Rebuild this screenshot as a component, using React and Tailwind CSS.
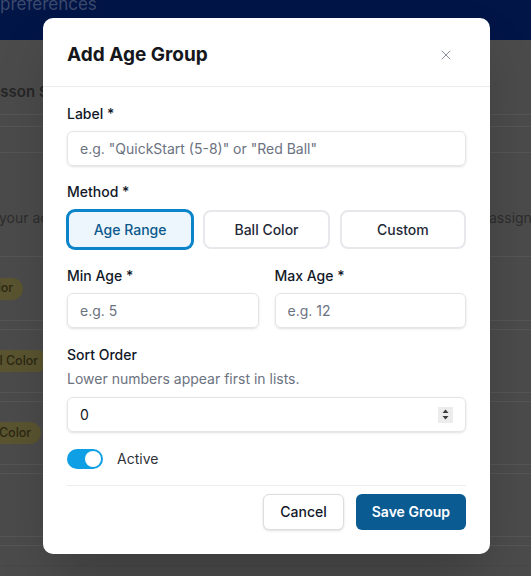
import React from "react";
import { X } from "lucide-react";

function Badge({ className }) {
  return (
    <span
      className={`inline-flex h-[22px] items-center whitespace-nowrap rounded-full bg-[#5a5430] px-2.5 text-[12.5px] font-medium text-[#2b2812] ${className}`}
    >
      Ball Color
    </span>
  );
}

function Field({ label, placeholder, className = "" }) {
  return (
    <div className={`flex flex-col ${className}`}>
      <label className="text-sm font-medium leading-5 text-[#111827]">{label}</label>
      <input
        className="mt-[7px] h-[35px] w-full rounded-md border border-[#e3e5e9] px-3 text-sm text-[#111827] shadow-sm outline-none placeholder:text-[#6b7280]"
        placeholder={placeholder}
      />
    </div>
  );
}

export default function App() {
  return (
    <div className="relative h-[576px] w-[531px] overflow-hidden bg-[#4b4b4b] font-[Inter,'Noto_Sans',sans-serif]">
      {/* background page (dimmed) */}
      <div className="flex flex-col">
        <div className="h-[40px] overflow-hidden bg-[#021547]">
          <p className="-mt-[8px] whitespace-nowrap text-[17px] leading-6 text-[#3c4a6c]">preferences</p>
        </div>
        <div className="h-[75px] border-b border-[#555555] pt-[42px]">
          <p className="-ml-[17px] whitespace-nowrap text-[15px] font-semibold leading-5 text-[#262626]">
            Lesson Settings
          </p>
        </div>
        <div className="h-[12px] border-b border-[#555555]" />
        <div className="h-[26px] border-b border-[#555555]" />
        <div className="flex h-[104px] justify-between whitespace-nowrap border-b border-[#555555] pt-[55px] text-[14px] leading-5 text-[#2d2d2d]">
          <span className="-ml-[1px]">your academy</span>
          <span className="w-[42px] overflow-hidden">assigning</span>
        </div>
        <div className="flex h-[64px] items-center border-b border-[#555555]">
          <Badge className="-ml-[54px]" />
        </div>
        <div className="h-[9px] border-b border-[#555555]" />
        <div className="flex h-[63px] items-center border-b border-[#555555]">
          <Badge className="-ml-[29px]" />
        </div>
        <div className="h-[9px] border-b border-[#555555]" />
        <div className="flex h-[63px] items-center border-b border-[#555555]">
          <Badge className="-ml-[36px]" />
        </div>
        <div className="h-[9px] border-b border-[#555555]" />
        <div className="h-[63px] border-b border-[#555555]" />
        <div className="h-[9px] border-b border-[#555555]" />
        <div className="h-[20px] border-b border-[#474747]" />
      </div>

      {/* modal */}
      <div className="absolute left-[43px] top-[18px] w-[447px] rounded-[10px] bg-white shadow-2xl">
        <div className="flex h-[69px] items-center justify-between border-b border-[#ececec] pl-6 pr-[36px] pt-[6px]">
          <h2 className="text-[19px] font-bold leading-7 text-[#15171c]">Add Age Group</h2>
          <X className="h-4 w-4 text-[#8a8f98]" strokeWidth={1.5} />
        </div>

        <div className="px-6 pb-6 pt-[17px]">
          <Field label="Label *" placeholder={'e.g. "QuickStart (5-8)" or "Red Ball"'} />

          <div className="mt-4 flex flex-col">
            <span className="text-sm font-medium leading-5 text-[#111827]">Method *</span>
            <div className="mt-2 grid grid-cols-3 gap-2.5">
              <button className="h-[39px] rounded-lg border-2 border-[#0b84c9] bg-[#eef6fd] text-sm font-medium text-[#0b5a8c] ring-1 ring-[#0b84c9]">
                Age Range
              </button>
              <button className="h-[39px] rounded-lg border-2 border-[#e6e8eb] bg-white text-sm font-medium text-[#1f2937]">
                Ball Color
              </button>
              <button className="h-[39px] rounded-lg border-2 border-[#e6e8eb] bg-white text-sm font-medium text-[#1f2937]">
                Custom
              </button>
            </div>
          </div>

          <div className="mt-[17px] grid grid-cols-2 gap-4">
            <Field label="Min Age *" placeholder="e.g. 5" />
            <Field label="Max Age *" placeholder="e.g. 12" />
          </div>

          <div className="mt-[17px] flex flex-col">
            <span className="text-sm font-medium leading-5 text-[#111827]">Sort Order</span>
            <span className="mt-1 text-sm leading-5 text-[#6b7280]">Lower numbers appear first in lists.</span>
            <div className="mt-2 flex h-[35px] items-center justify-between rounded-md border border-[#e3e5e9] pl-3 pr-3 shadow-sm">
              <span className="text-sm text-[#111827]">0</span>
              <div className="flex h-[16px] w-[15px] items-center justify-center bg-[#ececec]">
                <svg width="7" height="11" viewBox="0 0 7 11">
                  <path d="M3.5 0.5 L6.5 4 L0.5 4 Z" fill="#3a3a3a" />
                  <path d="M3.5 10.5 L6.5 7 L0.5 7 Z" fill="#3a3a3a" />
                </svg>
              </div>
            </div>
          </div>

          <div className="mt-[17px] flex items-center">
            <div className="flex h-5 w-9 items-center justify-end rounded-full bg-[#0e9fe4] px-[2px]">
              <div className="h-4 w-4 rounded-full bg-white" />
            </div>
            <span className="ml-[14px] text-sm leading-5 text-[#2f3237]">Active</span>
          </div>

          <div className="mt-4 flex justify-end gap-3 border-t border-[#ececec] pt-2">
            <button className="h-9 rounded-md border border-[#dcdde0] bg-white px-4 text-sm font-medium text-[#111827] shadow-sm">
              Cancel
            </button>
            <button className="h-9 rounded-md bg-[#0a5b92] px-4 text-sm font-semibold text-white">
              Save Group
            </button>
          </div>
        </div>
      </div>
    </div>
  );
}
